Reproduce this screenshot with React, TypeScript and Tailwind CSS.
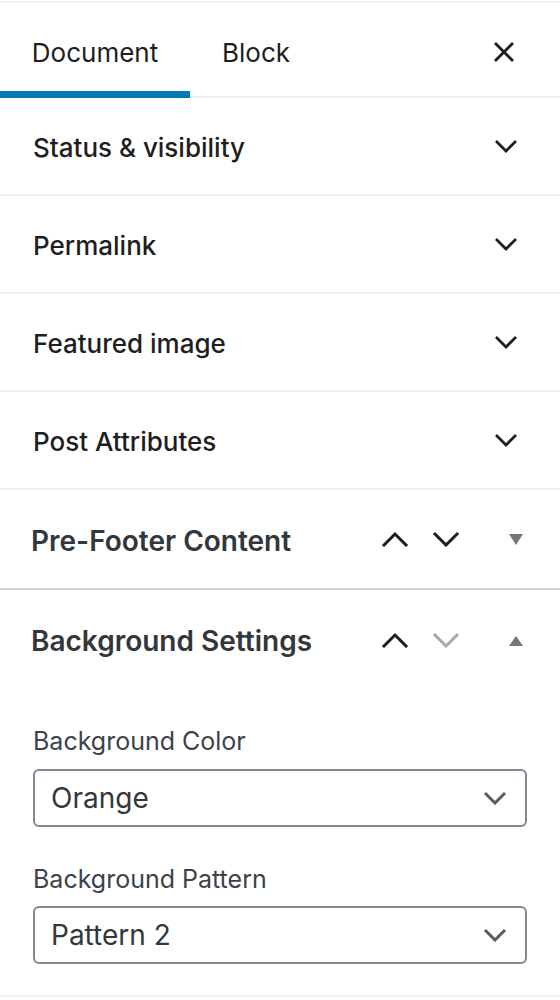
import React from "react";

const Chevron = ({ up = false, color = "#1e1e1e", w = 3 }: { up?: boolean; color?: string; w?: number }) => (
  <svg width="28" height="16" viewBox="0 0 28 16" fill="none">
    <path
      d={up ? "M3 14 L14 3 L25 14" : "M3 3 L14 14 L25 3"}
      stroke={color}
      strokeWidth={w}
      strokeLinecap="square"
      strokeLinejoin="miter"
    />
  </svg>
);

const SmallChevron = () => (
  <svg width="24" height="14" viewBox="0 0 24 14" fill="none">
    <path d="M2 2 L12 12 L22 2" stroke="#1e1e1e" strokeWidth="2.8" />
  </svg>
);

const Triangle = ({ up = false }: { up?: boolean }) => (
  <svg width="16" height="12" viewBox="0 0 16 12">
    <path d={up ? "M1 12 L8 2 L15 12 Z" : "M1 1 L15 1 L8 12 Z"} fill="#72777c" />
  </svg>
);

const Panel = ({ title }: { title: string }) => (
  <div className="flex h-[98px] items-center justify-between border-b-2 border-[#f0f0f0] pl-[33px] pr-[42px]">
    <span className="pt-[2px] text-[26px] font-medium text-[#1e1e1e]">{title}</span>
    <SmallChevron />
  </div>
);

const Select = ({ value }: { value: string }) => (
  <div className="flex h-[58px] items-center justify-between rounded-[6px] border-2 border-[#7e8993] pl-[16px] pr-[18px]">
    <span className="text-[28px] text-[#32373c]">{value}</span>
    <svg width="24" height="14" viewBox="0 0 24 14" fill="none">
      <path d="M2 2 L12 12 L22 2" stroke="#555d66" strokeWidth="3" />
    </svg>
  </div>
);

export default function App() {
  return (
    <div className="w-[560px] bg-white" style={{ fontFamily: "Inter, 'Noto Sans', sans-serif" }}>
      <div className="h-[1px]" />
      <div className="h-[2px] bg-[#f0f0f0]" />
      <div className="relative flex h-[95px] items-stretch border-b-2 border-[#f0f0f0]">
        <div className="relative flex w-[190px] items-center justify-center pt-[5px] text-[26px] text-[#1e1e1e]">
          Document
          <div className="absolute bottom-[-2px] left-0 right-0 h-[7px] bg-[#007cba]" />
        </div>
        <div className="flex w-[132px] items-center justify-center pt-[5px] text-[26px] text-[#1e1e1e]">Block</div>
        <div className="ml-auto flex items-center pr-[45px] pt-[4px]">
          <svg width="22" height="22" viewBox="0 0 22 22">
            <path d="M2 2 L20 20 M20 2 L2 20" stroke="#1e1e1e" strokeWidth="2.8" />
          </svg>
        </div>
      </div>
      <Panel title="Status & visibility" />
      <Panel title="Permalink" />
      <Panel title="Featured image" />
      <Panel title="Post Attributes" />
      <div className="flex h-[100px] items-center border-b-2 border-[#ccd0d4] pl-[31px] pr-[36px]">
        <span className="flex-1 pt-[3px] text-[28px] font-semibold text-[#32373c]">Pre-Footer Content</span>
        <div className="flex items-center gap-[23px]">
          <Chevron up />
          <Chevron />
        </div>
        <div className="ml-[48px]">
          <Triangle />
        </div>
      </div>
      <div className="border-b-2 border-[#f0f0f0]">
        <div className="flex h-[100px] items-center pl-[31px] pr-[36px]">
          <span className="flex-1 pt-[2px] text-[28px] font-semibold text-[#32373c]">Background Settings</span>
          <div className="flex items-center gap-[23px]">
            <Chevron up />
            <Chevron color="#a2aab2" />
          </div>
          <div className="ml-[48px]">
            <Triangle up />
          </div>
        </div>
        <div className="px-[33px] pb-[31px] pt-[33px]">
          <div className="mb-[8px] text-[25px] text-[#3c434a]">Background Color</div>
          <Select value="Orange" />
          <div className="mb-[8px] mt-[34px] text-[25px] text-[#3c434a]">Background Pattern</div>
          <Select value="Pattern 2" />
        </div>
      </div>
    </div>
  );
}
